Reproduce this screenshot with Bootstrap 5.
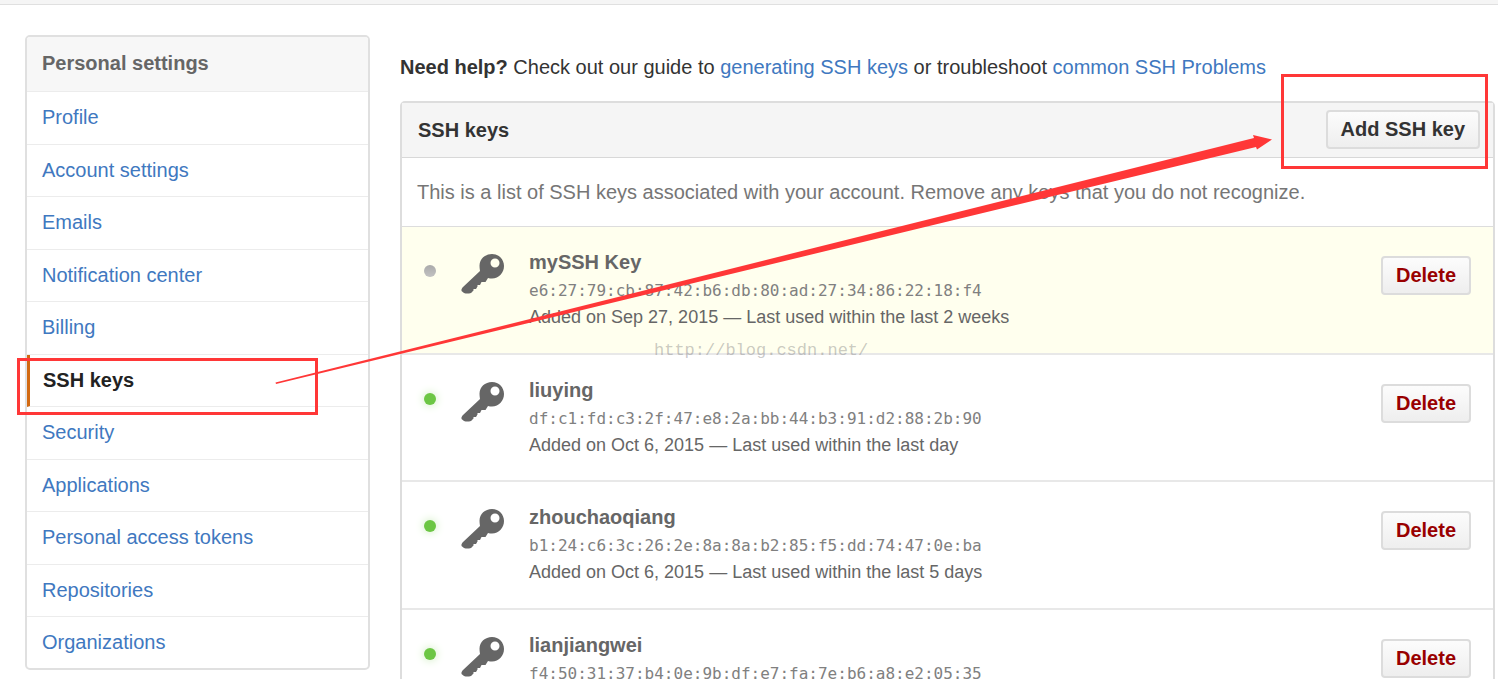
<!DOCTYPE html>
<html lang="en">
<head>
<meta charset="utf-8">
<meta name="viewport" content="width=device-width, initial-scale=1">
<title>SSH keys</title>
<link href="https://cdn.jsdelivr.net/npm/bootstrap@5.3.0/dist/css/bootstrap.min.css" rel="stylesheet">
<style>
body{font-family:"Liberation Sans",Arial,sans-serif;font-size:20px;line-height:26px;color:#333}
a{color:#4078c0;text-decoration:none}
.top-strip{height:5px;background:#f5f5f5;border-bottom:1px solid #e0e0e0}
.page-body{gap:30px;padding:30px 3px 0 25px}
.side-nav{width:345px;border:2px solid #e0e0e0;border-radius:5px}
.side-title{font-size:20px;line-height:26px;padding:13px 15px 15px;background:#f7f7f7;color:#666;border-bottom:1px solid #ececec}
.side-link{display:block;font-size:20px;line-height:26px;padding:12px 15px 14px;border-bottom:1px solid #ececec}
.side-link:nth-of-type(even){padding-bottom:13px}
.side-link:last-child{border-bottom:0;padding-bottom:13px}
.side-link.current{color:#222;font-weight:700;border-left:3px solid #d26911;padding-left:13px}
.main-col{min-width:0}
.help-line{margin:19px 0 21px}
.key-box{border:2px solid #ddd;border-radius:5px}
.key-head{background:#f5f5f5;border-bottom:1px solid #d8d8d8;padding:7px 13px 8px 16px}
.key-head h2{font-size:20px;line-height:26px}
.key-note{padding:21px 15px;color:#767676;border-bottom:1px solid #ddd}
.key-row{padding:22px 22px 22px;border-bottom:2px solid #e8e8e8;color:#666}
.key-row:nth-child(odd){padding-bottom:23px}
.key-row.unused{background:#ffe}
.dot{width:12px;height:12px;border-radius:50%;background:#6cc644;box-shadow:0 0 10px #c6eab4;margin-top:16px}
.unused .dot{background:linear-gradient(#aaa,#c2c2c2);box-shadow:none}
.key-icon{width:43px;height:41px;margin:4px 25px 0}
.key-text{line-height:26px}
.key-text h3{font-size:20px;line-height:26px}
.key-text code{display:block;padding-top:3px;font:16px/26px "DejaVu Sans Mono",monospace;color:#808080}
.key-text p{font-size:18px;line-height:26px}
.soft-btn{font-size:20px;line-height:26px;font-weight:700;color:#333;padding:4px 13px 5px;border:2px solid #dcdcdc;border-radius:4px;background:linear-gradient(#fcfcfc,#eee)}
.soft-btn.del{color:#900;margin-top:7px}
.markup{left:0;top:0;width:1498px;height:679px;pointer-events:none}
.stamp{left:654px;top:339px;font:17px/24px "Liberation Mono",monospace;color:rgba(120,120,120,.4)}
</style>
</head>
<body>
<div class="position-relative vh-100 overflow-hidden">
<div class="top-strip"></div>
<div class="page-body d-flex align-items-start">
<nav class="side-nav flex-shrink-0 overflow-hidden" aria-label="Personal settings">
<h2 class="side-title fw-bold m-0">Personal settings</h2>
<a class="side-link" href="#">Profile</a>
<a class="side-link" href="#">Account settings</a>
<a class="side-link" href="#">Emails</a>
<a class="side-link" href="#">Notification center</a>
<a class="side-link" href="#">Billing</a>
<a class="side-link current" href="#" aria-current="page">SSH keys</a>
<a class="side-link" href="#">Security</a>
<a class="side-link" href="#">Applications</a>
<a class="side-link" href="#">Personal access tokens</a>
<a class="side-link" href="#">Repositories</a>
<a class="side-link" href="#">Organizations</a>
</nav>
<main class="main-col flex-grow-1">
<p class="help-line"><strong>Need help?</strong> Check out our guide to <a href="#">generating SSH keys</a> or troubleshoot <a href="#">common SSH Problems</a></p>
<section class="key-box">
<div class="key-head d-flex justify-content-between align-items-center"><h2 class="fw-bold m-0">SSH keys</h2><button type="button" class="btn soft-btn">Add SSH key</button></div>
<div class="key-note">This is a list of SSH keys associated with your account. Remove any keys that you do not recognize.</div>
<div>
<div class="key-row unused d-flex align-items-start"><span class="dot"></span><svg class="key-icon" viewBox="0 0 43 41" aria-hidden="true"><path id="key" fill="#666" fill-rule="evenodd" d="M31 1C24 1 18.500 6 18.500 12.500q0 3 .5 5.500L1.500 34.500Q0 36 .5 38l2.500 2q3 1 7 0l2.500-2.500V36h2.500l1.500-2.500V32h2.500l1.500-3h4l2.500-4q2 .5 4 .5c7 0 12-6 12-12.500S38 1 31 1zM34 5.500a4.500 4.500 0 1 1 0 9 4.500 4.500 0 1 1 0-9z"/></svg><div class="key-text flex-grow-1"><h3 class="fw-bold m-0">mySSH Key</h3><code>e6:27:79:cb:87:42:b6:db:80:ad:27:34:86:22:18:f4</code><p class="m-0">Added on Sep 27, 2015 — Last used within the last 2 weeks</p></div><button type="button" class="btn soft-btn del">Delete</button></div>
<div class="key-row d-flex align-items-start"><span class="dot"></span><svg class="key-icon" viewBox="0 0 43 41" aria-hidden="true"><use href="#key"/></svg><div class="key-text flex-grow-1"><h3 class="fw-bold m-0">liuying</h3><code>df:c1:fd:c3:2f:47:e8:2a:bb:44:b3:91:d2:88:2b:90</code><p class="m-0">Added on Oct 6, 2015 — Last used within the last day</p></div><button type="button" class="btn soft-btn del">Delete</button></div>
<div class="key-row d-flex align-items-start"><span class="dot"></span><svg class="key-icon" viewBox="0 0 43 41" aria-hidden="true"><use href="#key"/></svg><div class="key-text flex-grow-1"><h3 class="fw-bold m-0">zhouchaoqiang</h3><code>b1:24:c6:3c:26:2e:8a:8a:b2:85:f5:dd:74:47:0e:ba</code><p class="m-0">Added on Oct 6, 2015 — Last used within the last 5 days</p></div><button type="button" class="btn soft-btn del">Delete</button></div>
<div class="key-row d-flex align-items-start"><span class="dot"></span><svg class="key-icon" viewBox="0 0 43 41" aria-hidden="true"><use href="#key"/></svg><div class="key-text flex-grow-1"><h3 class="fw-bold m-0">lianjiangwei</h3><code>f4:50:31:37:b4:0e:9b:df:e7:fa:7e:b6:a8:e2:05:35</code></div><button type="button" class="btn soft-btn del">Delete</button></div>
</div>
</section>
</main>
</div>
<span class="stamp position-absolute">http://blog.csdn.net/</span>
<svg class="markup position-absolute" viewBox="0 0 1498 679" aria-hidden="true">
<g fill="none" stroke="#ff3737" stroke-width="3"><path d="M18.500 359.500h298v54h-298zM1282.500 75.500h204v92h-204z"/></g>
<path fill="#ff3737" d="M275.500 382.500L1254 138l-1-3 19 4.500-15 10-1-2.500L276 384z"/>
</svg>
</div>
<script src="https://cdn.jsdelivr.net/npm/bootstrap@5.3.0/dist/js/bootstrap.bundle.min.js"></script>
</body>
</html>
